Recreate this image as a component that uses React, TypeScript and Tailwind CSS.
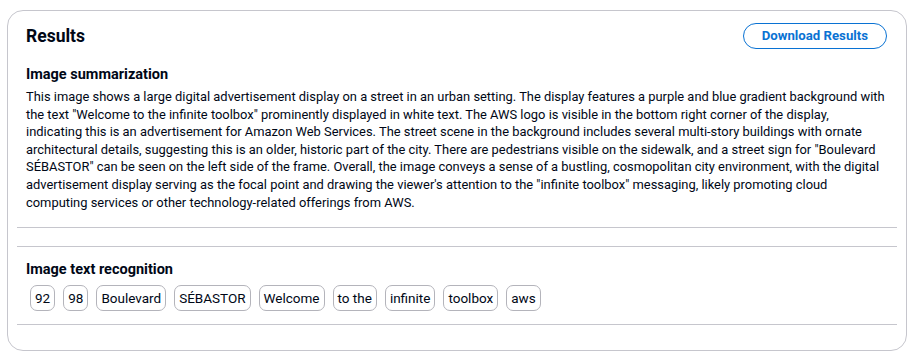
const summaryLines = [
  "This image shows a large digital advertisement display on a street in an urban setting. The display features a purple and blue gradient background with",
  'the text "Welcome to the infinite toolbox" prominently displayed in white text. The AWS logo is visible in the bottom right corner of the display,',
  "indicating this is an advertisement for Amazon Web Services. The street scene in the background includes several multi-story buildings with ornate",
  'architectural details, suggesting this is an older, historic part of the city. There are pedestrians visible on the sidewalk, and a street sign for "Boulevard',
  'SÉBASTOR" can be seen on the left side of the frame. Overall, the image conveys a sense of a bustling, cosmopolitan city environment, with the digital',
  'advertisement display serving as the focal point and drawing the viewer\'s attention to the "infinite toolbox" messaging, likely promoting cloud',
  "computing services or other technology-related offerings from AWS.",
];

const words = ["92", "98", "Boulevard", "SÉBASTOR", "Welcome", "to the", "infinite", "toolbox", "aws"];

export default function App() {
  return (
    <div className="min-h-screen bg-white pt-[10px] pl-[7px] font-['Roboto',sans-serif] text-[#000716]">
      <div className="w-[900px] h-[341px] rounded-[16px] border border-[#c6c6cd] px-[9px] pt-[12px]">
        <div className="flex items-center justify-between px-[9px] h-[26px]">
          <h2 className="text-[17.5px] font-bold leading-[22px]">Results</h2>
          <button className="h-[26px] px-[18px] mr-[1px] rounded-full border-[1.5px] border-[#0972d3] text-[#0972d3] text-[13.2px] font-bold">
            Download Results
          </button>
        </div>

        <section className="px-[9px] pt-[16px] pb-[16px] border-b border-[#c6c6cd]">
          <h3 className="text-[14.5px] font-bold leading-[19px]">Image summarization</h3>
          <p className="mt-[4px] text-[12.9px] leading-[17.6px]">
            {summaryLines.map((l, i) => (
              <span key={i} className="block whitespace-nowrap">
                {l}
              </span>
            ))}
          </p>
        </section>

        <div className="h-[19px] border-b border-[#c6c6cd]" />

        <section className="px-[9px] pt-[13px] pb-[13px] border-b border-[#c6c6cd]">
          <h3 className="text-[14.5px] font-bold leading-[19px]">Image text recognition</h3>
          <div className="mt-[6px] flex flex-wrap gap-[8px] pl-[4px]">
            {words.map((w) => (
              <span
                key={w}
                className="h-[26px] px-[4px] flex items-center rounded-[7px] border border-[#b4b4bb] text-[13.5px]"
              >
                {w}
              </span>
            ))}
          </div>
        </section>
      </div>
    </div>
  );
}
